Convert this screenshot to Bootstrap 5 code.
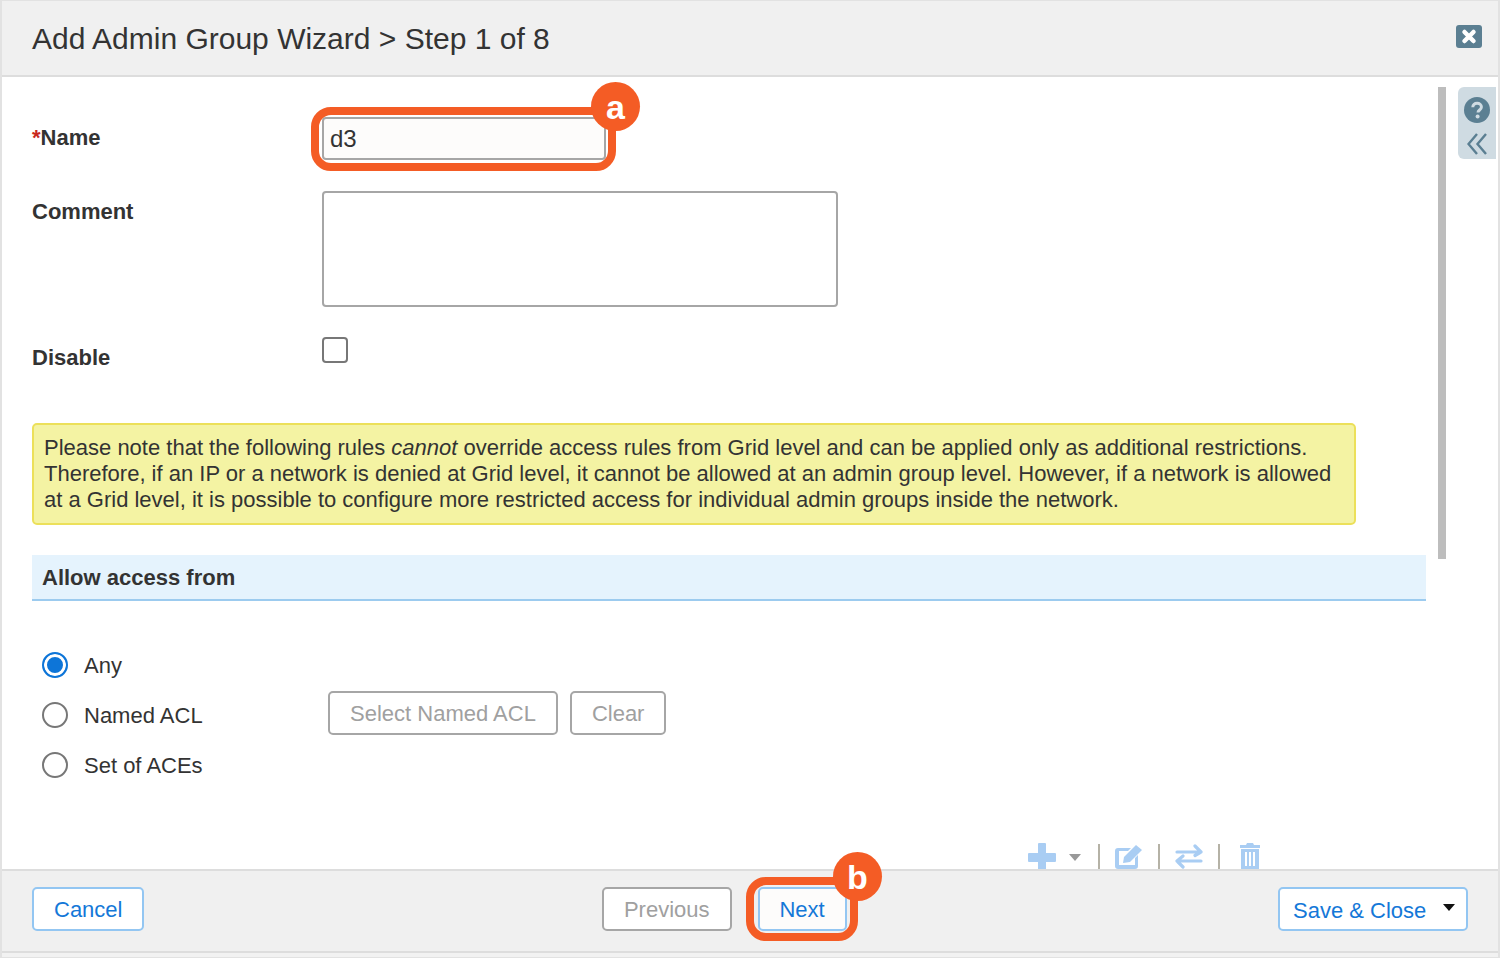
<!DOCTYPE html>
<html lang="en"><head><meta charset="utf-8"><title>Add Admin Group Wizard</title>
<link href="https://cdn.jsdelivr.net/npm/bootstrap@5.3.0/dist/css/bootstrap.min.css" rel="stylesheet">
<style>
html,body{height:958px;overflow:hidden}
body{font-family:"Liberation Sans",Arial,sans-serif;color:#333;background:#fff;position:relative}
.wiz{height:958px;border:2px solid #e2e2e2;border-top-width:1px;border-bottom-width:1px;display:flex;flex-direction:column}
.wiz-head{height:76px;flex:none;background:#f0f0f0;border-bottom:2px solid #ddd;padding:0 16px 0 30px}
.wiz-title{font-size:30px;line-height:1;margin:0;color:#333;font-weight:400;padding-top:2px}
.wiz-main{flex:1 1 auto;min-height:0;overflow:hidden;position:relative;padding:0 72px 0 30px}
.wiz-foot{height:82px;flex:none;background:#f0f0f0;border-top:2px solid #ddd;padding:0 30px 4px;display:flex;align-items:center;justify-content:space-between;position:relative}
.foot-strip{height:6px;flex:none;background:#f2f2f2;border-top:2px solid #ddd}
.f-label{font-size:22px;font-weight:700;color:#333;width:290px;flex:none;line-height:26px}
.f-row{display:flex}
.name-in{width:284px;height:43px;border:2px solid #a6a6a6;border-radius:4px;background:#fdfcfb;font-size:24px;padding:0 6px;color:#333;display:block;line-height:39px;outline:0;font-family:inherit}
.com-in{width:516px;height:116px;border:2px solid #a6a6a6;border-radius:4px;display:block;resize:none;outline:0}
.chk{width:26px;height:26px;border:2px solid #777;border-radius:4px;background:#fff;display:block;margin-top:1px}
.note-box{width:1324px;height:102px;background:#f4f3a3;border:2px solid #ece05a;border-radius:5px;padding:10px;font-size:22px;line-height:26px;color:#333;margin:0}
.sect{width:1394px;height:46px;background:#e5f3fd;border-bottom:2px solid #9ccbef;font-size:22px;font-weight:700;line-height:45px;padding-left:10px;color:#333;margin-top:30px}
.rad-list{margin-top:39px;position:relative}
.rad{display:flex;align-items:center;height:50px;padding-left:10px;font-size:22px;color:#333}
.rad-dot{width:26px;height:26px;border-radius:50%;border:2.5px solid #777;margin-right:16px;flex:none;background:#fff}
.rad-dot.on{border-color:#0d75d8;background:#0d75d8;box-shadow:inset 0 0 0 3px #fff}
.acl-btns{position:absolute;left:296px;top:51px;gap:12px}
.wbtn{height:44px;border:2px solid #a6a6a6;border-radius:5px;background:#fff;font-size:22px;color:#a0a0a0;padding:2px 20px 0;line-height:36px;font-family:inherit}
.wbtn.blue{border-color:#93c6f2;color:#1478d8}
.next-btn{background:#fdfcfb!important;width:89px;padding:2px 0 0}
.mid-btns{gap:26px;margin-left:26px}
.tools{position:absolute;right:238px;bottom:0;height:27px;display:flex;align-items:flex-end}
.tsep{width:2px;height:25px;background:#b5b2a6;margin:0 15px}
.t-caret{width:0;height:0;border:6px solid transparent;border-top:7px solid #999;border-bottom:0;margin:0 2px 8px 13px}
.side-tab{position:absolute;right:2px;top:10px;width:38px;height:72px;background:#cfdbe2;border-radius:6px 0 0 6px}
.help-ic{margin-top:10px}
.back-ic{margin-top:10px}
.scroll-bar{position:absolute;right:52px;top:10px;width:8px;height:472px;background:#bdbdbd}
.ring{position:absolute;border:8px solid #f45c25;border-radius:20px;pointer-events:none}
.mark-c{position:absolute;width:49px;height:49px;border-radius:50%;background:#f45c25;color:#fff;font-size:34px;font-weight:700;text-align:center;line-height:50px}
.save-btn{display:flex;align-items:center;width:190px;padding:3px 0 0 13px}
.caret-d{width:0;height:0;border:6px solid transparent;border-top:7px solid #111;border-bottom:0;margin-left:17px;margin-top:-7px}
.ring-a{left:311px;top:107px;width:305px;height:64px}
.mark-a{left:591px;top:82px}
.ring-b{left:746px;top:877px;width:112px;height:64px}
.mark-b{left:833px;top:852px}
.req{color:#c8281e}
.lbl-name{margin-top:8px}.lbl-com{padding-top:8px}.lbl-dis{padding-top:9px}
.row-name{padding-top:40px;height:114px}.row-com{height:145px}.row-dis{height:87px}
.trash-ic{margin-left:5px}
</style></head><body>
<div class="wiz">
<header class="wiz-head d-flex align-items-center justify-content-between">
<h1 class="wiz-title">Add Admin Group Wizard &gt; Step 1 of 8</h1>
<svg width="26" height="23" viewBox="0 0 26 23" class="mb-1"><rect width="26" height="23" rx="3" fill="#5b7f92"/><path d="M8.500 7l9 9M17.500 7l-9 9" stroke="#fff" stroke-width="4.500" stroke-linecap="round"/></svg>
</header>
<main class="wiz-main">
<div class="scroll-bar"></div>
<div class="side-tab d-flex flex-column align-items-center">
<svg class="help-ic" width="26" height="26" viewBox="0 0 26 26"><circle cx="13" cy="13" r="13" fill="#5b7f92"/><path d="M8.800 10.300c0-2.500 1.900-4 4.300-4s4.300 1.500 4.300 3.700c0 3-3.400 3-3.400 5.500" fill="none" stroke="#cfdbe2" stroke-width="3"/><circle cx="13.600" cy="19.500" r="2" fill="#cfdbe2"/></svg>
<svg class="back-ic" width="20" height="22" viewBox="0 0 20 22"><path d="M10 1L1.500 11 10 21M19 1l-8.500 10L19 21" fill="none" stroke="#5b7f92" stroke-width="2.400"/></svg>
</div>
<div class="f-row row-name"><div class="f-label lbl-name"><span class="req">*</span>Name</div><input class="name-in" value="d3" aria-label="Name"></div>
<div class="f-row row-com"><div class="f-label lbl-com">Comment</div><textarea class="com-in" aria-label="Comment"></textarea></div>
<div class="f-row row-dis"><div class="f-label lbl-dis">Disable</div><span class="chk"></span></div>
<p class="note-box">Please note that the following rules <i>cannot</i> override access rules from Grid level and can be applied only as additional restrictions. Therefore, if an IP or a network is denied at Grid level, it cannot be allowed at an admin group level. However, if a network is allowed at a Grid level, it is possible to configure more restricted access for individual admin groups inside the network.</p>
<div class="sect">Allow access from</div>
<div class="rad-list">
<div class="rad"><span class="rad-dot on"></span>Any</div>
<div class="rad"><span class="rad-dot"></span>Named ACL</div>
<div class="rad"><span class="rad-dot"></span>Set of ACEs</div>
<div class="acl-btns d-flex"><button class="wbtn">Select Named ACL</button><button class="wbtn">Clear</button></div>
</div>
<div class="tools">
<svg width="28" height="26" viewBox="0 0 28 26"><path d="M10 1a1 1 0 0 1 1-1h6a1 1 0 0 1 1 1v9h9a1 1 0 0 1 1 1v7a1 1 0 0 1-1 1h-9v7h-8v-7H1a1 1 0 0 1-1-1v-7a1 1 0 0 1 1-1h9z" fill="#a9cdf3"/></svg>
<span class="t-caret"></span>
<span class="tsep"></span>
<svg width="28" height="25" viewBox="0 0 28 25"><path d="M3 4h13l-3 3H4v14h16v-7l3-3v11a3 3 0 0 1-3 3H3a3 3 0 0 1-3-3V7a3 3 0 0 1 3-3z" fill="#a9cdf3"/><path d="M9 13L21 1l6 5-12 12-7 1z" fill="#a9cdf3"/></svg>
<span class="tsep"></span>
<svg width="28" height="25" viewBox="0 0 28 25"><path d="M2 8h24M20 2l6 6-6 3.500M26 17H2M8 12l-6 5 6 6" fill="none" stroke="#a9cdf3" stroke-width="3.200" stroke-linecap="round" stroke-linejoin="round"/></svg>
<span class="tsep"></span>
<svg class="trash-ic" width="20" height="26" viewBox="0 0 20 26"><path d="M6 2l1-2h6l1 2h6v3H0V2zM1 6h18v20H1zM5 9v14h2V9zM9 9v14h2V9zM13 9v14h2V9z" fill="#a9cdf3" fill-rule="evenodd"/></svg>
</div>
</main>
<footer class="wiz-foot">
<button class="wbtn blue">Cancel</button>
<div class="d-flex mid-btns"><button class="wbtn">Previous</button><button class="wbtn blue next-btn">Next</button></div>
<button class="wbtn blue save-btn">Save &amp; Close<span class="caret-d"></span></button>
</footer>
<div class="foot-strip"></div>
</div>
<div class="ring ring-a"></div>
<div class="mark-c mark-a">a</div>
<div class="ring ring-b"></div>
<div class="mark-c mark-b">b</div>
<script src="https://cdn.jsdelivr.net/npm/bootstrap@5.3.0/dist/js/bootstrap.bundle.min.js"></script>
</body></html>
